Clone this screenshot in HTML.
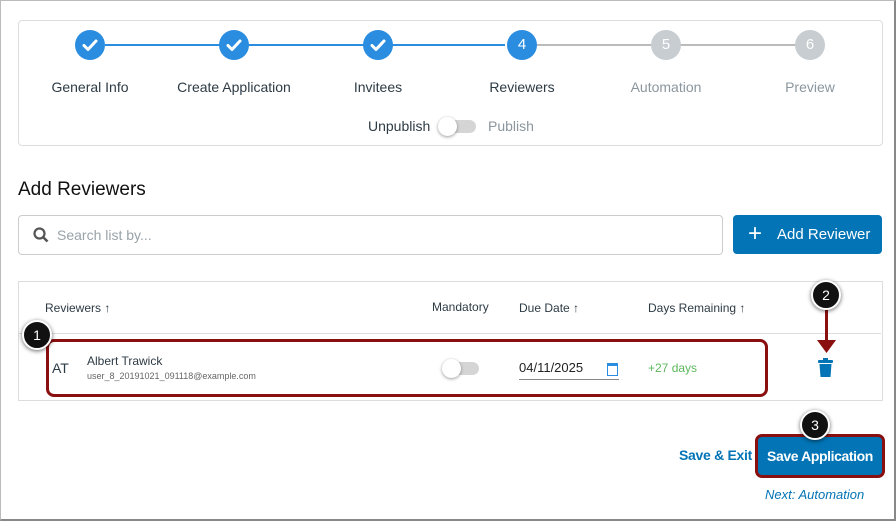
<!DOCTYPE html>
<html><head><style>
body{margin:0;width:896px;height:521px;background:#fff;font-family:"Liberation Sans",sans-serif;position:relative;overflow:hidden;color:#2d3b45}
.a{position:absolute}
.frame{left:0;top:0;width:893px;height:518px;border:1px solid #bbb;border-right:2px solid #888;border-bottom:2px solid #888}
.card{left:18px;top:20px;width:863px;height:124px;border:1px solid #ddd;border-radius:4px}
.c{width:30px;height:30px;border-radius:50%;top:30px;color:#fff;font-size:15px;text-align:center;line-height:30px}
.lab{top:79px;font-size:14px;width:160px;text-align:center}
.callout{width:26px;height:26px;border-radius:50%;background:#111;border:2px solid #fff;box-shadow:0 1px 4px rgba(0,0,0,.6);color:#fff;font-size:14px;text-align:center;line-height:26px}
</style></head><body>
<div class="a frame"></div>
<div class="a card"></div>
<div class="a" style="left:105px;top:44px;width:400px;height:2px;background:#2b8de0"></div>
<div class="a" style="left:537px;top:44px;width:260px;height:2px;background:#bbb"></div>
<div class="a c" style="left:75px;background:#2b8de0"><svg width="30" height="30"><path d="M9 15.5l4 4 8-8.5" fill="none" stroke="#fff" stroke-width="3" stroke-linecap="round" stroke-linejoin="round"/></svg></div>
<div class="a c" style="left:219px;background:#2b8de0"><svg width="30" height="30"><path d="M9 15.5l4 4 8-8.5" fill="none" stroke="#fff" stroke-width="3" stroke-linecap="round" stroke-linejoin="round"/></svg></div>
<div class="a c" style="left:363px;background:#2b8de0"><svg width="30" height="30"><path d="M9 15.5l4 4 8-8.5" fill="none" stroke="#fff" stroke-width="3" stroke-linecap="round" stroke-linejoin="round"/></svg></div>
<div class="a c" style="left:507px;background:#2b8de0">4</div>
<div class="a c" style="left:651px;background:#c7cdd1">5</div>
<div class="a c" style="left:795px;background:#c7cdd1">6</div>
<div class="a lab" style="left:10px">General Info</div>
<div class="a lab" style="left:154px">Create Application</div>
<div class="a lab" style="left:298px">Invitees</div>
<div class="a lab" style="left:442px">Reviewers</div>
<div class="a lab" style="left:586px;color:#8b969e">Automation</div>
<div class="a lab" style="left:730px;color:#8b969e">Preview</div>
<div class="a" style="left:368px;top:118px;font-size:14px">Unpublish</div>
<div class="a" style="left:440px;top:120px;width:36px;height:13px;border-radius:7px;background:#d5d5d5"></div>
<div class="a" style="left:438px;top:117px;width:19px;height:19px;border-radius:50%;background:#fff;box-shadow:0 1px 3px rgba(0,0,0,.4)"></div>
<div class="a" style="left:488px;top:118px;font-size:14px;color:#8b969e">Publish</div>
<div class="a" style="left:18px;top:179px;font-size:19px;color:#111">Add Reviewers</div>
<div class="a" style="left:18px;top:215px;width:703px;height:38px;border:1px solid #ccc;border-radius:4px"></div>
<svg class="a" style="left:33px;top:227px" width="16" height="16"><circle cx="6.5" cy="6.5" r="5" fill="none" stroke="#555" stroke-width="2.2"/><line x1="10" y1="10" x2="14.5" y2="14.5" stroke="#555" stroke-width="2.6"/></svg>
<div class="a" style="left:57px;top:227px;font-size:14px;color:#9aa3a9">Search list by...</div>
<div class="a" style="left:733px;top:215px;width:149px;height:39px;background:#0374b5;border-radius:4px;color:#fff;font-size:15px;line-height:39px"><span style="font-size:24px;position:absolute;left:15px;top:-1px;font-weight:300">+</span><span style="position:absolute;left:44px">Add Reviewer</span></div>
<div class="a" style="left:18px;top:281px;width:863px;height:118px;border:1px solid #ddd"></div>
<div class="a" style="left:19px;top:333px;width:862px;height:1px;background:#ddd"></div>
<div class="a" style="left:45px;top:301px;font-size:12px">Reviewers ↑</div>
<div class="a" style="left:432px;top:300px;font-size:12px">Mandatory</div>
<div class="a" style="left:519px;top:301px;font-size:12px">Due Date ↑</div>
<div class="a" style="left:648px;top:301px;font-size:12px">Days Remaining ↑</div>
<div class="a" style="left:52px;top:360px;font-size:14px">AT</div>
<div class="a" style="left:87px;top:354px;font-size:12px">Albert Trawick</div>
<div class="a" style="left:87px;top:371px;font-size:9px;color:#666">user_8_20191021_091118@example.com</div>
<div class="a" style="left:444px;top:362px;width:35px;height:13px;border-radius:7px;background:#d5d5d5"></div>
<div class="a" style="left:442px;top:359px;width:19px;height:19px;border-radius:50%;background:#fff;box-shadow:0 1px 3px rgba(0,0,0,.4)"></div>
<div class="a" style="left:519px;top:360px;font-size:13px;color:#222">04/11/2025</div>
<div class="a" style="left:519px;top:379px;width:100px;height:1px;background:#888"></div>
<div class="a" style="left:607px;top:363px;width:9px;height:9px;border:1.5px solid #2b8de0;border-top-width:3px"></div>
<div class="a" style="left:648px;top:361px;font-size:12px;color:#5cb85c">+27 days</div>
<svg class="a" style="left:818px;top:358px" width="16" height="20"><rect x="0" y="2" width="15" height="3" rx="1" fill="#0374b5"/><rect x="5" y="0" width="5" height="3" fill="#0374b5"/><path d="M1.5 6h12l-1 13h-10z" fill="#0374b5"/></svg>
<div class="a" style="left:46px;top:339px;width:716px;height:52px;border:3px solid #8a0f0f;border-radius:8px"></div>
<div class="a callout" style="left:22px;top:320px">1</div>
<div class="a" style="left:825px;top:308px;width:3px;height:34px;background:#8a0f0f"></div>
<svg class="a" style="left:817px;top:340px" width="20" height="14"><path d="M0 0h19l-9.5 13z" fill="#8a0f0f"/></svg>
<div class="a callout" style="left:811px;top:280px">2</div>
<div class="a" style="left:679px;top:447px;font-size:14px;font-weight:bold;color:#0374b5;letter-spacing:-0.3px">Save &amp; Exit</div>
<div class="a" style="left:755px;top:434px;width:124px;height:38px;border:3px solid #8a0f0f;border-radius:7px;background:#0374b5;color:#fff;font-size:14px;font-weight:bold;text-align:center;line-height:38px;letter-spacing:-0.4px">Save Application</div>
<div class="a callout" style="left:800px;top:410px">3</div>
<div class="a" style="left:765px;top:487px;font-size:13px;font-style:italic;color:#0374b5">Next: Automation</div>
</body></html>
